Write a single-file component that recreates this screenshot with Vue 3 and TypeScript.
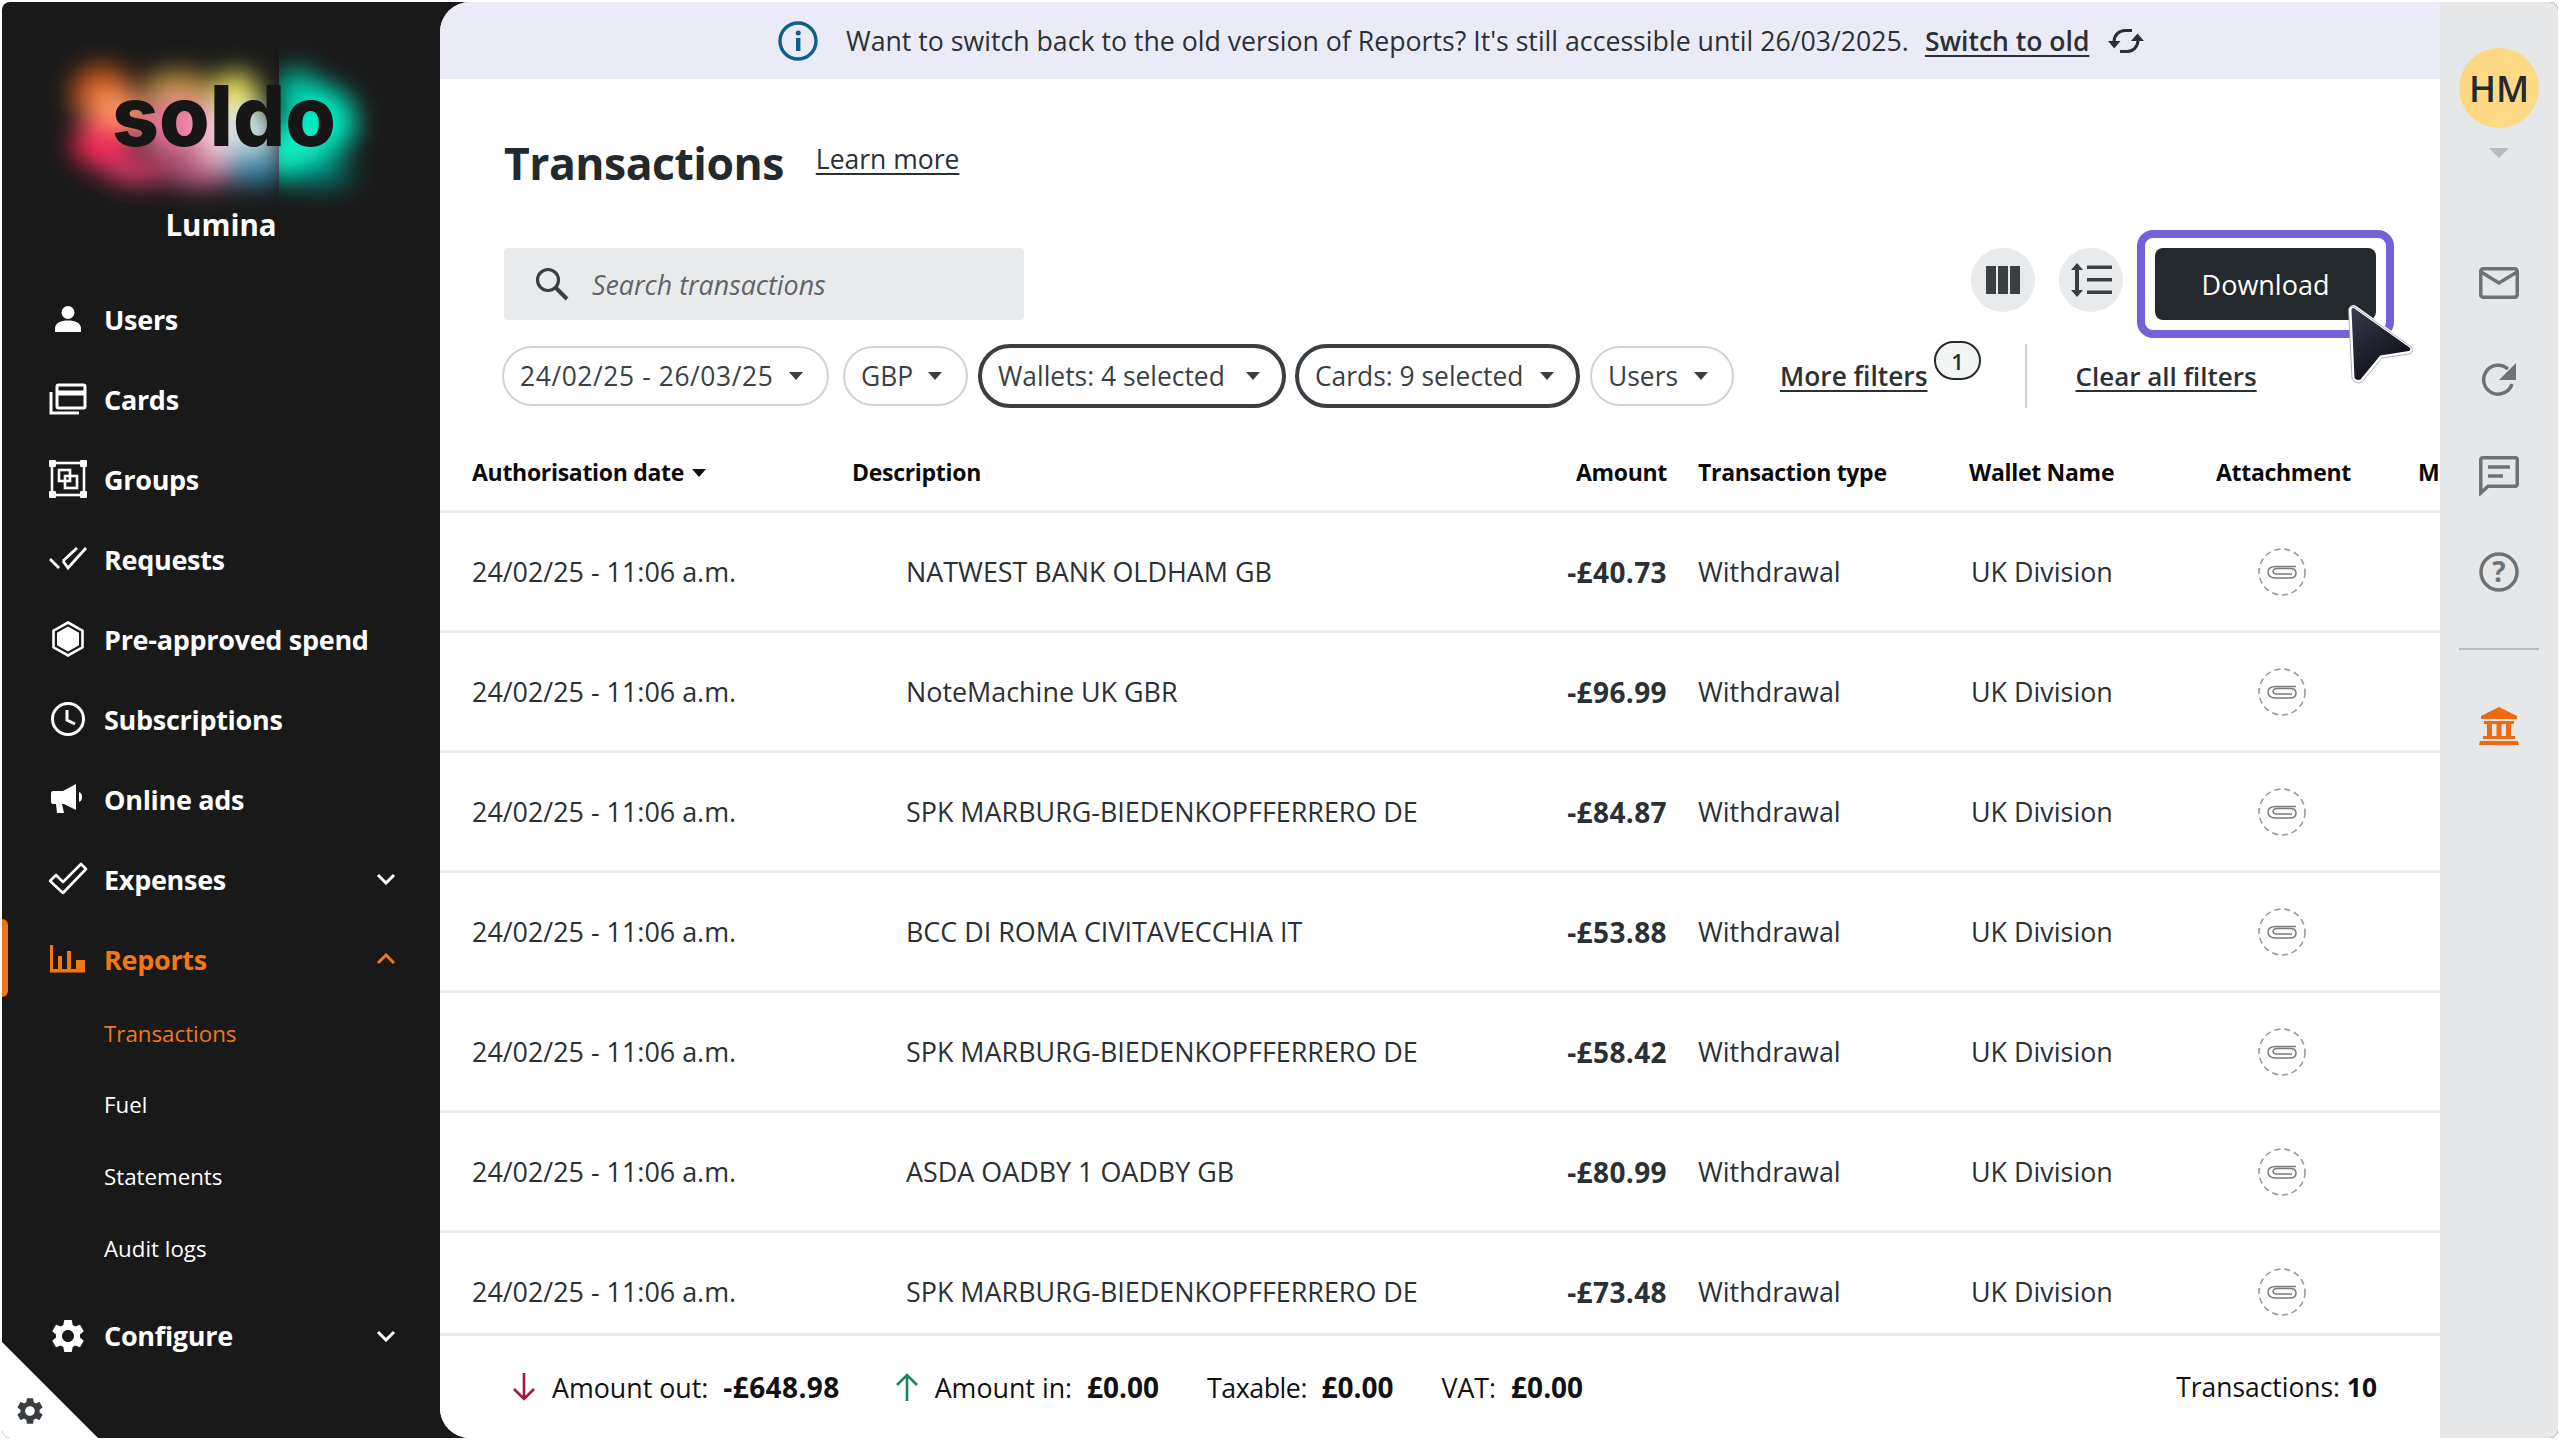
<script setup lang="ts">
interface NavItem { label: string; icon: string; chevron?: 'up' | 'down'; active?: boolean }
const navTop: NavItem[] = [
  { label: 'Users', icon: 'user' },
  { label: 'Cards', icon: 'cards' },
  { label: 'Groups', icon: 'groups' },
  { label: 'Requests', icon: 'requests' },
  { label: 'Pre-approved spend', icon: 'hex' },
  { label: 'Subscriptions', icon: 'clock' },
  { label: 'Online ads', icon: 'ads' },
  { label: 'Expenses', icon: 'expenses', chevron: 'down' },
  { label: 'Reports', icon: 'reports', chevron: 'up', active: true },
]
const subItems = ['Transactions', 'Fuel', 'Statements', 'Audit logs']
const rows = [
  ['NATWEST BANK OLDHAM GB', '-£40.73'],
  ['NoteMachine UK GBR', '-£96.99'],
  ['SPK MARBURG-BIEDENKOPFFERRERO DE', '-£84.87'],
  ['BCC DI ROMA CIVITAVECCHIA IT', '-£53.88'],
  ['SPK MARBURG-BIEDENKOPFFERRERO DE', '-£58.42'],
  ['ASDA OADBY 1 OADBY GB', '-£80.99'],
  ['SPK MARBURG-BIEDENKOPFFERRERO DE', '-£73.48'],
]
const gearPath = 'M19.14 12.94c.04-.3.06-.61.06-.94 0-.32-.02-.64-.07-.94l2.03-1.58a.49.49 0 0 0 .12-.61l-1.92-3.32a.488.488 0 0 0-.59-.22l-2.39.96c-.5-.38-1.03-.7-1.62-.94l-.36-2.54a.484.484 0 0 0-.48-.41h-3.84c-.24 0-.43.17-.47.41l-.36 2.54c-.59.24-1.13.57-1.62.94l-2.39-.96c-.22-.08-.47 0-.59.22L2.74 8.87c-.12.21-.08.47.12.61l2.03 1.58c-.05.3-.09.63-.09.94s.02.64.07.94l-2.03 1.58a.49.49 0 0 0-.12.61l1.92 3.32c.12.22.37.29.59.22l2.39-.96c.5.38 1.03.7 1.62.94l.36 2.54c.05.24.24.41.48.41h3.84c.24 0 .44-.17.47-.41l.36-2.54c.59-.24 1.13-.56 1.62-.94l2.39.96c.22.08.47 0 .59-.22l1.92-3.32c.12-.22.07-.47-.12-.61l-2.01-1.58zM12 15.6c-1.98 0-3.6-1.62-3.6-3.6s1.62-3.6 3.6-3.6 3.6 1.62 3.6 3.6-1.62 3.6-3.6 3.6z'
</script>

<template>
  <div class="shell">
    <aside class="sidebar">
      <div class="brand">
        <svg class="logo" width="438" height="210" viewBox="0 0 438 210">
          <defs>
            <filter id="soft" x="-30%" y="-30%" width="160%" height="160%"><feGaussianBlur stdDeviation="13" /></filter>
            <clipPath id="leftClip"><rect x="0" y="0" width="277" height="210" /></clipPath>
            <clipPath id="rightClip"><rect x="277" y="0" width="161" height="210" /></clipPath>
          </defs>
          <g clip-path="url(#leftClip)">
            <g filter="url(#soft)">
              <ellipse cx="100" cy="92" rx="30" ry="28" fill="#d95e1a" />
              <ellipse cx="116" cy="112" rx="28" ry="20" fill="#ff9f68" />
              <ellipse cx="100" cy="142" rx="30" ry="24" fill="#f52a5c" />
              <ellipse cx="136" cy="168" rx="34" ry="14" fill="#d93a6c" />
              <ellipse cx="176" cy="88" rx="36" ry="18" fill="#c99a40" />
              <ellipse cx="176" cy="126" rx="36" ry="28" fill="#f077a2" />
              <ellipse cx="200" cy="170" rx="34" ry="14" fill="#cc6592" />
              <ellipse cx="234" cy="96" rx="24" ry="26" fill="#ebe95e" />
              <ellipse cx="214" cy="132" rx="17" ry="30" fill="#f8cad6" />
              <ellipse cx="248" cy="132" rx="28" ry="26" fill="#cce6ea" />
              <ellipse cx="252" cy="164" rx="32" ry="18" fill="#3b8fae" />
            </g>
          </g>
          <g clip-path="url(#rightClip)">
            <g filter="url(#soft)">
              <ellipse cx="294" cy="88" rx="24" ry="22" fill="#00ac8a" />
              <ellipse cx="318" cy="120" rx="36" ry="36" fill="#00e9c2" />
              <ellipse cx="288" cy="150" rx="30" ry="30" fill="#0af0c4" />
              <ellipse cx="318" cy="172" rx="34" ry="12" fill="#05857a" />
            </g>
          </g>
          <text x="110" y="144" class="logo-word" textLength="224" lengthAdjust="spacingAndGlyphs">soldo</text>
        </svg>
        <div class="tenant">Lumina</div>
      </div>

      <nav class="nav">
        <a v-for="item in navTop" :key="item.label" class="nav-row" :class="{ active: item.active }">
          <span class="nav-icon">
            <svg v-if="item.icon === 'user'" width="28" height="28" viewBox="0 0 28 28" fill="currentColor"><circle cx="14" cy="7.500" r="6.500" /><path d="M1 27v-3.500C1 18 7 15.500 14 15.500S27 18 27 23.500V27z" /></svg>
            <svg v-else-if="item.icon === 'cards'" width="38" height="32" viewBox="0 0 38 32" fill="none" stroke="currentColor" stroke-width="3"><path d="M2 9v21h28" /><rect x="8" y="2" width="28" height="23" rx="1.500" /><path d="M8 10h28" stroke-width="5" /></svg>
            <svg v-else-if="item.icon === 'groups'" width="38" height="38" viewBox="0 0 38 38" fill="none" stroke="currentColor" stroke-width="2.600"><rect x="3" y="3" width="32" height="32" /><rect x="10" y="10" width="11" height="11" /><rect x="16" y="16" width="12" height="12" /><g fill="currentColor" stroke="none"><rect width="7" height="7" rx="1" /><rect x="31" width="7" height="7" rx="1" /><rect y="31" width="7" height="7" rx="1" /><rect x="31" y="31" width="7" height="7" rx="1" /></g></svg>
            <svg v-else-if="item.icon === 'requests'" width="38" height="24" viewBox="0 0 38 24" fill="none" stroke="currentColor" stroke-width="2.800"><path d="M1 12l9 9" /><path d="M14 14l5 7L37 1" /><path d="M14 14L28 1" /></svg>
            <svg v-else-if="item.icon === 'hex'" width="32" height="36" viewBox="0 0 32 36"><path d="M16 1.500L30.500 9.700v16.600L16 34.500 1.500 26.300V9.700z" fill="none" stroke="currentColor" stroke-width="2.600" /><path d="M16 5.500L27 11.700v12.600L16 30.500 5 24.300V11.700z" fill="currentColor" /></svg>
            <svg v-else-if="item.icon === 'clock'" width="36" height="36" viewBox="0 0 36 36" fill="none" stroke="currentColor" stroke-width="3"><circle cx="18" cy="18" r="15.500" /><path d="M17 9v10l8 4" /></svg>
            <svg v-else-if="item.icon === 'ads'" width="34" height="30" viewBox="0 0 34 30" fill="currentColor"><path d="M0 9a2 2 0 0 1 2-2h10L25 0v26L13 20h-2l2 9H6l-1-9H2a2 2 0 0 1-2-2z" /><path d="M28 8c4 1 4 9 0 10z" /></svg>
            <svg v-else-if="item.icon === 'expenses'" width="40" height="34" viewBox="0 0 40 34" fill="none" stroke="currentColor" stroke-width="2.600" stroke-linejoin="round"><path d="M2 19l6-6 7 7L33 2l5 5-23 24z" /></svg>
            <svg v-else-if="item.icon === 'reports'" width="36" height="28" viewBox="0 0 36 28" fill="currentColor"><path d="M0 0h3v24h5V11h4v13h5V6h4v18h5v-9h9v12.500H0z" /></svg>
          </span>
          <span class="nav-label">{{ item.label }}</span>
          <svg v-if="item.chevron" class="chev" width="20" height="12" viewBox="0 0 20 12" fill="none" stroke="currentColor" stroke-width="3"><path :d="item.chevron === 'down' ? 'M2 2l8 8 8-8' : 'M2 10l8-8 8 8'" /></svg>
        </a>
        <a v-for="(sub, i) in subItems" :key="sub" class="sub-row" :class="{ active: i === 0 }">{{ sub }}</a>
        <a class="nav-row configure">
          <span class="nav-icon"><svg width="40" height="40" viewBox="0 0 24 24" fill="currentColor"><path :d="gearPath" /></svg></span>
          <span class="nav-label">Configure</span>
          <svg class="chev" width="20" height="12" viewBox="0 0 20 12" fill="none" stroke="currentColor" stroke-width="3"><path d="M2 2l8 8 8-8" /></svg>
        </a>
      </nav>

      <div class="corner">
        <svg width="32" height="32" viewBox="0 0 24 24" fill="#3a3e42"><path :d="gearPath" /></svg>
      </div>
    </aside>

    <main class="main">
      <div class="banner">
        <svg width="40" height="40" viewBox="0 0 40 40"><circle cx="20" cy="20" r="18" fill="none" stroke="#0b618c" stroke-width="3.400" /><rect x="18" y="17" width="4.400" height="13" fill="#0b618c" /><circle cx="20.200" cy="12" r="2.500" fill="#0b618c" /></svg>
        <span class="banner-text">Want to switch back to the old version of Reports? It's still accessible until 26/03/2025.</span>
        <a class="link banner-link">Switch to old</a>
        <svg class="swap" width="36" height="26" viewBox="0 0 36 26" fill="#2b3035"><path d="M6 14C6 7 11 2.500 17 2.500h7M30 12c0 7-5 11.500-11 11.500h-7" fill="none" stroke="#2b3035" stroke-width="3" /><path d="M0 13h12.500L6.200 20.500zM23 13h13L29.500 5.500z" /></svg>
      </div>

      <header class="title-row">
        <h1>Transactions</h1>
        <a class="link learn">Learn more</a>
      </header>

      <section class="tools">
        <div class="search">
          <svg width="36" height="36" viewBox="0 0 36 36" fill="none" stroke="#3a3f44" stroke-width="3.200"><circle cx="14" cy="14" r="10.500" /><path d="M22 22l11 11" stroke-width="4" /></svg>
          <span>Search transactions</span>
        </div>
        <div class="spacer"></div>
        <button class="round">
          <svg width="34" height="28" viewBox="0 0 34 28" fill="#3a3f44"><rect width="10" height="28" /><rect x="12" width="10" height="28" /><rect x="24" width="10" height="28" /></svg>
        </button>
        <button class="round">
          <svg width="42" height="34" viewBox="0 0 42 34" fill="#3a3f44"><path d="M7 0l6 7H9v20h4l-6 7-6-7h4V7H1z" /><rect x="17" y="2.500" width="25" height="3.500" /><rect x="17" y="15" width="25" height="3.500" /><rect x="17" y="27.500" width="25" height="3.500" /></svg>
        </button>
        <div class="outline"><button class="download">Download</button></div>
        <svg class="cursor" width="72" height="86" viewBox="0 0 72 86">
          <defs><linearGradient id="cur" x1="0" y1="0" x2="0.600" y2="1"><stop offset="0" stop-color="#3b3d4d" /><stop offset="1" stop-color="#0a0b14" /></linearGradient></defs>
          <path d="M5 8c0-3 3-4 5-3l55 39c3 2 2 6-1 6.500L36 55 17 78c-3 3-8 1-9-2z" fill="url(#cur)" stroke="#fff" stroke-width="3" />
          <path d="M3.500 8c0-3 3-4.500 5.500-3.500l56 39.500c4 2.500 3 7.500-1 8L37 56 18 79c-4 4-10 1-11-3z" fill="none" stroke="#8b8d95" stroke-width="1" opacity=".7" />
        </svg>
      </section>

      <section class="filters">
        <button class="pill date">24/02/25 - 26/03/25<i class="caret"></i></button>
        <button class="pill gbp">GBP<i class="caret"></i></button>
        <button class="pill strong wallets">Wallets: 4 selected<i class="caret"></i></button>
        <button class="pill strong cards">Cards: 9 selected<i class="caret"></i></button>
        <button class="pill users">Users<i class="caret"></i></button>
        <span class="more"><a class="link">More filters</a><b class="badge">1</b></span>
        <span class="sep"></span>
        <a class="link clear">Clear all filters</a>
      </section>

      <section class="table">
        <div class="grid head">
          <span>Authorisation date<i class="caret sort"></i></span>
          <span>Description</span>
          <span class="right">Amount</span>
          <span class="type">Transaction type</span>
          <span>Wallet Name</span>
          <span>Attachment</span>
          <span>M</span>
        </div>
        <div v-for="(r, i) in rows" :key="i" class="grid row">
          <span>24/02/25 - 11:06 a.m.</span>
          <span class="desc">{{ r[0] }}</span>
          <b class="right amount">{{ r[1] }}</b>
          <span class="type">Withdrawal</span>
          <span class="wallet">UK Division</span>
          <span class="attach">
            <svg width="48" height="48" viewBox="0 0 48 48" fill="none"><circle cx="24" cy="24" r="23" stroke="#999" stroke-width="1.600" stroke-dasharray="6 4" /><path d="M38 18.500H18c-5 0-8 2-8 5.500s3 6 8 6h14c4 0 6-2 6-5s-2-4.500-6-4.500H19c-2.500 0-4 1-4 2.800s1.500 2.800 4 2.800h15" stroke="#7a7a7a" stroke-width="1.500" /></svg>
          </span>
          <span></span>
        </div>
      </section>

      <footer class="footer">
        <svg class="arrow" width="24" height="28" viewBox="0 0 24 28" fill="none" stroke="#a5163c" stroke-width="2.600"><path d="M12 0v26M2 16l10 10 10-10" /></svg>
        <span class="f-item f1">Amount out: <b class="out">-£648.98</b></span>
        <svg class="arrow up" width="24" height="28" viewBox="0 0 24 28" fill="none" stroke="#1c8062" stroke-width="2.600"><path d="M12 28V2M2 12L12 2l10 10" /></svg>
        <span class="f-item f2">Amount in: <b>£0.00</b></span>
        <span class="f-item f3 tax">Taxable: <b>£0.00</b></span>
        <span class="f-item f3">VAT: <b>£0.00</b></span>
        <span class="f-total">Transactions: <b>10</b></span>
      </footer>
    </main>

    <aside class="rail">
      <div class="avatar">HM</div>
      <i class="rail-caret"></i>
      <div class="rail-icons">
        <span class="rail-icon"><svg width="40" height="32" viewBox="0 0 40 32" fill="none" stroke="#6f7175" stroke-width="3.500"><rect x="1.750" y="1.750" width="36.500" height="28.500" rx="2.500" /><path d="M2 5l18 11L38 5" /></svg></span>
        <span class="rail-icon"><svg width="36" height="36" viewBox="0 0 36 36" fill="none"><path d="M31 23a14.500 14.500 0 1 1-4-15" stroke="#6f7175" stroke-width="3.500" /><path d="M35 2v17H18z" fill="#6f7175" /></svg></span>
        <span class="rail-icon"><svg width="40" height="40" viewBox="0 0 40 40" fill="none" stroke="#6f7175" stroke-width="3.500"><path d="M3.500 1.750h33a1.750 1.750 0 0 1 1.750 1.750v25a1.750 1.750 0 0 1-1.750 1.750H9L1.750 37V3.500a1.750 1.750 0 0 1 1.750-1.750z" /><path d="M9 11h22M9 20h15" /></svg></span>
        <span class="rail-icon"><svg width="40" height="40" viewBox="0 0 40 40"><circle cx="20" cy="20" r="18" fill="none" stroke="#6f7175" stroke-width="3.500" /><text x="20" y="30" class="q">?</text></svg></span>
      </div>
      <div class="rail-sep"></div>
      <span class="rail-icon bank"><svg width="40" height="38" viewBox="0 0 40 38" fill="#ed6a12"><path d="M20 0L2 9v3h36V9z" /><rect x="5" y="14" width="30" height="3" /><rect x="8" y="17" width="5" height="12" /><rect x="17.500" y="17" width="5" height="12" /><rect x="27" y="17" width="5" height="12" /><rect x="4" y="29" width="32" height="3" /><path d="M1 34h38l1 4H0z" /></svg></span>
    </aside>
  </div>
</template>

<style>
html, body { margin: 0; background: #fff; }
</style>

<style scoped>
.shell {
  position: relative;
  width: 2556px;
  height: 1436px;
  margin: 2px;
  display: flex;
  background: #191919;
  border-radius: 8px;
  overflow: hidden;
  font-family: "Open Sans", "Noto Sans", sans-serif;
  color: #2b3035;
}
.sidebar { position: relative; width: 438px; flex: none; display: flex; flex-direction: column; color: #fff; }
.brand { position: relative; height: 277px; flex: none; }
.logo { position: absolute; left: 0; top: 0; }
.logo-word { font-family: Inter, sans-serif; font-weight: 800; font-size: 84px; fill: #161616; }
.tenant { position: absolute; left: 0; right: 0; top: 203px; text-align: center; font-size: 29.500px; font-weight: 700; line-height: 40px; }
.nav { display: flex; flex-direction: column; }
.nav-row { position: relative; height: 80px; flex: none; display: flex; align-items: center; font-size: 27px; font-weight: 700; letter-spacing: -0.3px; }
.nav-row.active { color: #f5770f; margin-bottom: -1px; }
.nav-row.active::before { content: ""; position: absolute; left: 0; top: 0; bottom: 2px; width: 6px; background: #f2750f; border-radius: 0 6px 6px 0; }
.nav-icon { width: 102px; flex: none; display: flex; justify-content: center; padding-left: 30px; box-sizing: border-box; }
.chev { position: absolute; left: 374px; top: 34px; }
.sub-row { height: 71.700px; flex: none; display: flex; align-items: center; padding-left: 102px; font-size: 22.300px; line-height: 1; }
.sub-row.active { color: #f0781e; }
.configure { margin-top: 11px; }
.corner { position: absolute; left: 0; bottom: 0; width: 96px; height: 96px; background: #fff; clip-path: polygon(0 0, 100% 100%, 0 100%); }
.corner svg { position: absolute; left: 12px; bottom: 11px; }

.main { position: relative; flex: 1; min-width: 0; background: #fff; border-radius: 30px 0 0 30px; display: flex; flex-direction: column; overflow: hidden; }
.banner { height: 77px; flex: none; background: #ebebf7; display: flex; align-items: center; padding-left: 338px; font-size: 26.700px; color: #2b3035; }
.banner-text { margin-left: 28px; }
.banner-link { margin-left: 16px; font-weight: 600; font-size: 26.500px; }
.swap { margin-left: 19px; }
.link { text-decoration: underline; text-underline-offset: 4px; color: #2b3035; }
.title-row { flex: none; display: flex; align-items: center; padding: 24px 0 0 64px; box-sizing: border-box; margin-top: 14px; height: 114px; }
h1 { margin: 0; font-size: 44.500px; font-weight: 700; color: #24292d; letter-spacing: -0.5px; }
.learn { margin-left: 32px; font-size: 26.500px; font-weight: 500; margin-top: -6px; }

.tools { position: relative; flex: none; display: flex; align-items: center; height: 72px; margin-top: 41px; padding-left: 64px; }
.search { width: 520px; height: 72px; box-sizing: border-box; background: #e9eaeb; border-radius: 4px; display: flex; align-items: center; padding-left: 30px; gap: 22px; font-style: italic; font-size: 26.800px; color: #5f6468; }
.spacer { flex: 1; }
.round { width: 64px; height: 64px; border: 0; border-radius: 50%; background: #e9eaeb; display: flex; align-items: center; justify-content: center; padding: 0; margin-right: 24px; margin-top: -8px; }
.outline { width: 257px; height: 108px; flex: none; box-sizing: border-box; border: 8px solid #7460d8; border-radius: 16px; padding: 10px; margin-right: 46px; display: flex; background: #fff; margin-left: -10px; }
.download { width: 100%; height: 100%; border: 0; border-radius: 8px; background: #24292d; color: #fff; font: inherit; font-size: 27px; }
.cursor { position: absolute; left: 1905px; top: 54px; }

.filters { flex: none; height: 64px; margin-top: 24px; padding-left: 62px; display: flex; align-items: center; font-size: 26.400px; }
.pill { height: 60px; box-sizing: border-box; border: 2px solid #d0d2d4; border-radius: 30px; background: #fff; display: inline-flex; align-items: center; justify-content: space-between; padding: 0 24px 0 16px; font: inherit; color: #3a3f44; margin-right: 11px; }
.pill.strong { height: 64px; border: 4px solid #3a3f44; border-radius: 32px; padding-right: 22px; }
.date { width: 327px; margin-right: 14px; letter-spacing: 0.6px; }
.gbp { width: 125px; margin-right: 10px; }
.wallets { width: 308px; margin-right: 9px; }
.cards { width: 285px; margin-right: 10px; }
.users { width: 144px; margin-right: 46px; }
.caret { display: inline-block; width: 0; height: 0; border-left: 7px solid transparent; border-right: 7px solid transparent; border-top: 8px solid #3a3f44; }
.more { position: relative; display: inline-flex; font-weight: 600; font-size: 26.300px; }
.badge { position: absolute; left: 154px; top: -17px; width: 47px; height: 39px; box-sizing: border-box; border: 2px solid #24292d; border-radius: 20px; background: #f3f4f4; display: flex; align-items: center; justify-content: center; font-weight: 600; font-size: 22px; }
.sep { width: 2px; height: 64px; background: #cfd0d2; margin-left: 97px; }
.clear { margin-left: 49px; font-weight: 600; font-size: 26px; }

.table { flex: 1; min-height: 0; overflow: hidden; margin-top: 26px; }
.grid { display: grid; grid-template-columns: 380px 628px 187px 302px 247px 202px 1fr; padding-left: 32px; align-items: center; border-bottom: 3px solid #e9eaeb; box-sizing: border-box; white-space: nowrap; }
.head { height: 79px; font-size: 23px; font-weight: 700; color: #0a0a0a; letter-spacing: -0.3px; }
.row { height: 120px; font-size: 26.900px; }
.amount { font-size: 28px; letter-spacing: 0.4px; }
.right { text-align: right; }
.type { padding-left: 31px; }
.desc { padding-left: 54px; }
.wallet { padding-left: 2px; }
.attach { display: flex; padding-left: 42px; }
.sort { margin-left: 8px; vertical-align: 4px; border-top-color: #111; }
.head > :last-child { overflow: hidden; }

.footer { height: 102px; flex: none; background: #fff; border-top: 3px solid #e9eaeb; display: flex; align-items: center; padding: 0 63px 0 72px; font-size: 26.800px; color: #111; margin-top: -1px; }
.f-item { white-space: pre; }
.f-item b { margin-left: 8px; font-size: 28px; }
.f-item .out { letter-spacing: 0.4px; }
.f1, .f2 { margin-left: 16px; }
.f3 { margin-left: 48px; }
.tax { letter-spacing: -0.5px; }
.tax b { letter-spacing: 0; }
.arrow.up { margin-left: 55px; }
.f-total { margin-left: auto; font-size: 26.400px; }

.rail { width: 118px; flex: none; background: #e6e7e9; display: flex; flex-direction: column; align-items: center; padding-top: 46px; box-sizing: border-box; }
.avatar { width: 80px; height: 80px; border-radius: 50%; background: #fdd985; display: flex; align-items: center; justify-content: center; font-size: 36px; font-weight: 600; color: #24292d; }
.rail-caret { margin-top: 20px; width: 0; height: 0; border-left: 10px solid transparent; border-right: 10px solid transparent; border-top: 10px solid #b8babc; }
.rail-icons { margin-top: 77px; display: flex; flex-direction: column; }
.rail-icon { height: 96.300px; display: flex; align-items: center; justify-content: center; }
.rail-sep { width: 80px; height: 2px; background: #b9bbbd; margin-top: 28px; }
.bank { margin-top: 28px; }
.q { font-size: 28px; font-weight: 700; fill: #6f7175; text-anchor: middle; }
</style>
